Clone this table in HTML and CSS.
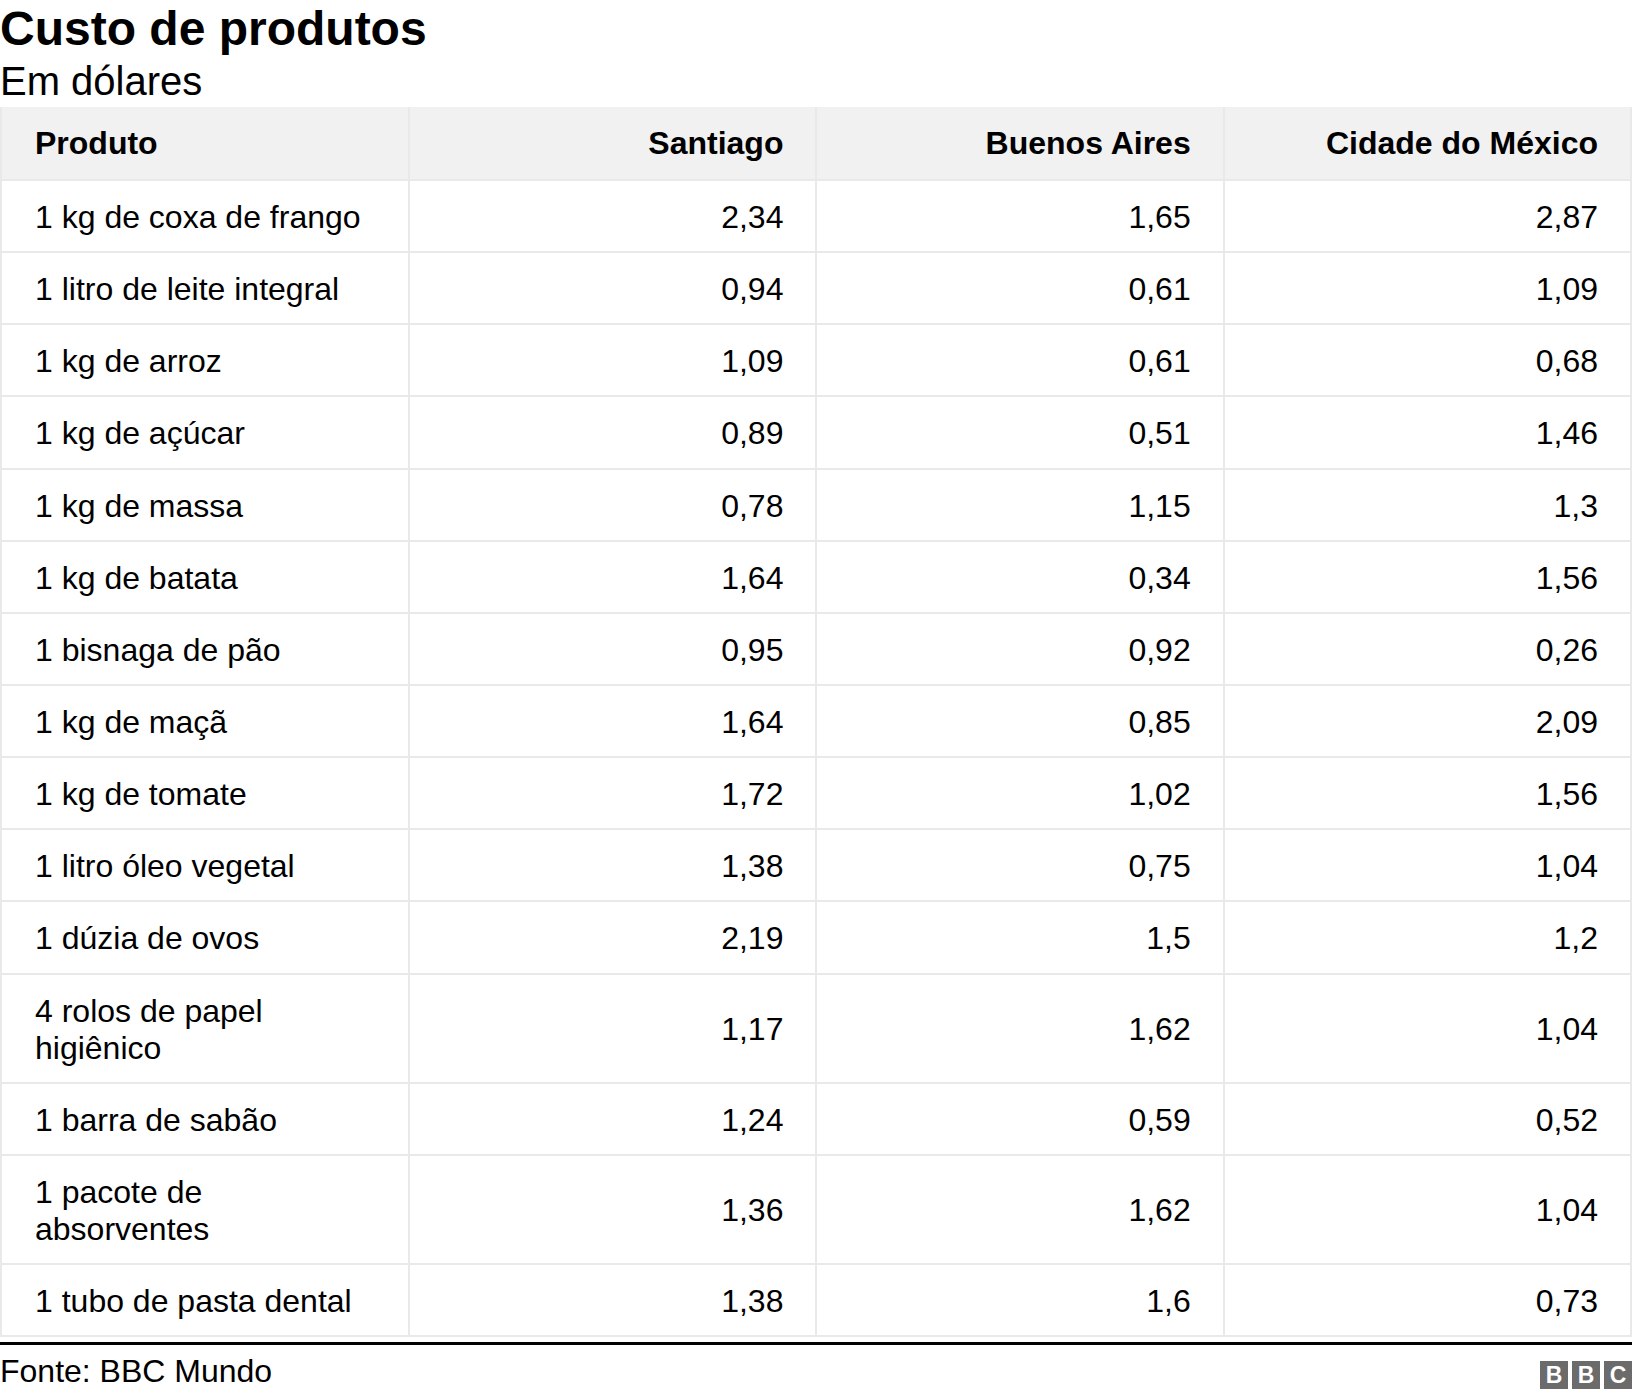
FILE: index.html
```html
<!DOCTYPE html>
<html lang="pt">
<head>
<meta charset="utf-8">
<title>Custo de produtos</title>
<link rel="stylesheet" href="styles.css">
</head>
<body>
<div class="chart">
  <h1 class="title">Custo de produtos</h1>
  <p class="subtitle">Em dólares</p>
  <table class="data">
    <thead>
      <tr>
        <th class="label">Produto</th>
        <th class="num">Santiago</th>
        <th class="num">Buenos Aires</th>
        <th class="num">Cidade do México</th>
      </tr>
    </thead>
    <tbody>
      <tr><td class="label">1 kg de coxa de frango</td><td class="num">2,34</td><td class="num">1,65</td><td class="num">2,87</td></tr>
      <tr><td class="label">1 litro de leite integral</td><td class="num">0,94</td><td class="num">0,61</td><td class="num">1,09</td></tr>
      <tr><td class="label">1 kg de arroz</td><td class="num">1,09</td><td class="num">0,61</td><td class="num">0,68</td></tr>
      <tr><td class="label">1 kg de açúcar</td><td class="num">0,89</td><td class="num">0,51</td><td class="num">1,46</td></tr>
      <tr><td class="label">1 kg de massa</td><td class="num">0,78</td><td class="num">1,15</td><td class="num">1,3</td></tr>
      <tr><td class="label">1 kg de batata</td><td class="num">1,64</td><td class="num">0,34</td><td class="num">1,56</td></tr>
      <tr><td class="label">1 bisnaga de pão</td><td class="num">0,95</td><td class="num">0,92</td><td class="num">0,26</td></tr>
      <tr><td class="label">1 kg de maçã</td><td class="num">1,64</td><td class="num">0,85</td><td class="num">2,09</td></tr>
      <tr><td class="label">1 kg de tomate</td><td class="num">1,72</td><td class="num">1,02</td><td class="num">1,56</td></tr>
      <tr><td class="label">1 litro óleo vegetal</td><td class="num">1,38</td><td class="num">0,75</td><td class="num">1,04</td></tr>
      <tr><td class="label">1 dúzia de ovos</td><td class="num">2,19</td><td class="num">1,5</td><td class="num">1,2</td></tr>
      <tr><td class="label">4 rolos de papel higiênico</td><td class="num">1,17</td><td class="num">1,62</td><td class="num">1,04</td></tr>
      <tr><td class="label">1 barra de sabão</td><td class="num">1,24</td><td class="num">0,59</td><td class="num">0,52</td></tr>
      <tr><td class="label">1 pacote de absorventes</td><td class="num">1,36</td><td class="num">1,62</td><td class="num">1,04</td></tr>
      <tr><td class="label">1 tubo de pasta dental</td><td class="num">1,38</td><td class="num">1,6</td><td class="num">0,73</td></tr>
    </tbody>
  </table>
  <div class="footer">
    <span class="source">Fonte: BBC Mundo</span>
    <div class="bbc-logo" aria-label="BBC">
      <span class="block">B</span>
      <span class="block">B</span>
      <span class="block">C</span>
    </div>
  </div>
</div>
</body>
</html>
```
FILE: styles.css
```css
html, body {
  margin: 0;
  padding: 0;
  background: #ffffff;
}

body {
  font-family: "Liberation Sans", Arial, Helvetica, sans-serif;
  color: #000000;
}

.chart {
  width: 1632px;
}

.title {
  margin: 0;
  font-size: 48px;
  font-weight: 700;
  line-height: 58px;
}

.subtitle {
  margin: 2px 0 0 0;
  font-size: 40px;
  font-weight: 400;
  line-height: 42px;
}

.data {
  margin-top: 5px;
  width: 100%;
  table-layout: fixed;
  border-collapse: separate;
  border-spacing: 0;
  border-left: 2px solid #e9e9e9;
  font-size: 32px;
  line-height: 37px;
}

.data th,
.data td {
  width: 25%;
  padding: 18px 32px 15px 32px;
  border-right: 2px solid #e9e9e9;
  border-bottom: 2px solid #e9e9e9;
  vertical-align: middle;
}

.data td {
  height: 37.15px;
}

.data th {
  background: #f1f1f1;
  font-weight: 700;
  padding-bottom: 17px;
}

.data th:first-child,
.data td:first-child {
  padding-left: 33px;
}

.data .label {
  text-align: left;
}

.data .num {
  text-align: right;
}

.footer {
  margin-top: 5px;
  border-top: 3px solid #000000;
  padding-top: 8px;
  display: flex;
  justify-content: space-between;
  align-items: flex-start;
}

.source {
  font-size: 32px;
  line-height: 37px;
}

.bbc-logo {
  display: flex;
  gap: 4px;
  margin-top: 8px;
}

.bbc-logo .block {
  width: 28px;
  height: 28px;
  background: #6b6b6b;
  color: #ffffff;
  font-weight: 700;
  font-size: 23px;
  line-height: 28px;
  text-align: center;
}
```
